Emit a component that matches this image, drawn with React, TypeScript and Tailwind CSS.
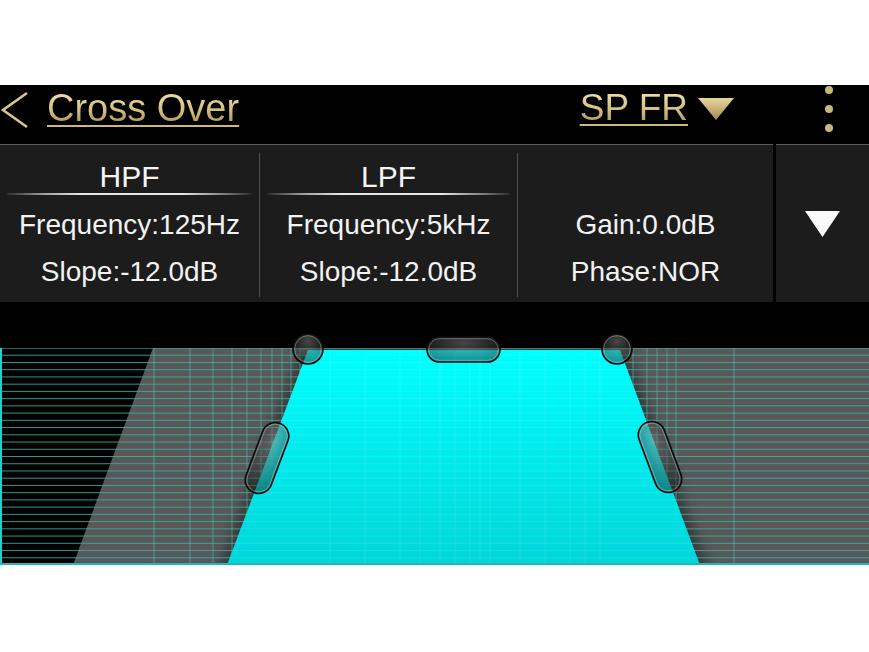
const GOLD_TEXT =
  "bg-gradient-to-b from-[#f3e9bd] via-[#d8c482] to-[#9e8647] bg-clip-text text-transparent underline decoration-[#cdb877] decoration-2 underline-offset-[4px]";

const H_LINES = Array.from({ length: 29 }, (_, i) => 46 + ((i + 1) * 217) / 30);
const V_LINES = [154, 190, 213, 232, 247, 261, 272, 282, 291, 300, 633, 647, 657, 667, 676, 734];
const CYAN_V = [330, 365, 400, 420, 440, 455, 470, 480, 490, 520, 545, 570, 585, 600];

function Header() {
  return (
    <div className="h-[59px] bg-black flex items-start">
      <svg width="32" height="50" viewBox="0 0 32 50" className="shrink-0">
        <polyline points="27,8 3,25 27,42" fill="none" stroke="#d8c68c" strokeWidth="2.6" />
      </svg>
      <span className={`ml-[15px] mt-[1px] text-[38px] leading-[44px] ${GOLD_TEXT}`}>Cross Over</span>
      <div className="flex-1" />
      <span className={`mt-[1px] text-[37px] leading-[44px] ${GOLD_TEXT}`}>SP FR</span>
      <svg width="36" height="22" viewBox="0 0 36 22" className="ml-[10px] mt-[13px] shrink-0">
        <defs>
          <linearGradient id="tri" x1="0" y1="0" x2="0" y2="1">
            <stop offset="0" stopColor="#e6d79f" />
            <stop offset="1" stopColor="#a38c4e" />
          </linearGradient>
        </defs>
        <polygon points="0,0 36,0 18,22" fill="url(#tri)" />
      </svg>
      <svg width="10" height="50" viewBox="0 0 10 50" className="ml-[90px] mr-[35px] shrink-0">
        <circle cx="5" cy="5" r="4" fill="#c9b67a" />
        <circle cx="5" cy="24" r="4" fill="#c9b67a" />
        <circle cx="5" cy="43" r="4" fill="#c9b67a" />
      </svg>
    </div>
  );
}

function Row({ children }: { children: React.ReactNode }) {
  return <div className="h-[32px] leading-[32px] text-[28px] text-[#f2f2f2] whitespace-nowrap">{children}</div>;
}

function FilterCol({ title, freq, slope, width }: { title: string; freq: string; slope: string; width: string }) {
  return (
    <div className={`${width} flex flex-col items-center pt-[16px]`}>
      <div className="h-[32px] leading-[32px] text-[30px] text-[#f4f4f4]">{title}</div>
      <div className="h-[2px] self-stretch mx-[7px] bg-[linear-gradient(90deg,#2a2a2a_0%,#9a9a9a_14%,#e6e6e6_30%,#e6e6e6_72%,#777_90%,#2a2a2a_100%)]" />
      <div className="mt-[14px]">
        <Row>{freq}</Row>
      </div>
      <div className="mt-[15px]">
        <Row>{slope}</Row>
      </div>
    </div>
  );
}

function Divider() {
  return <div className="w-px mt-[8px] mb-[5px] bg-[#505050]" />;
}

function Panel() {
  return (
    <div className="flex h-[158px] bg-black">
      <div className="w-[773px] flex bg-[#1c1c1c] border-t border-[#5c5c5c]">
        <FilterCol title="HPF" freq="Frequency:125Hz" slope="Slope:-12.0dB" width="w-[259px]" />
        <Divider />
        <FilterCol title="LPF" freq="Frequency:5kHz" slope="Slope:-12.0dB" width="w-[257px]" />
        <Divider />
        <div className="flex-1 flex flex-col items-center pt-[64px]">
          <Row>Gain:0.0dB</Row>
          <div className="mt-[15px]">
            <Row>Phase:NOR</Row>
          </div>
        </div>
      </div>
      <div className="ml-[3px] flex-1 bg-[#1c1c1c] border-t border-[#5c5c5c] flex items-center justify-center">
        <svg width="35" height="26" viewBox="0 0 35 26">
          <polygon points="0,0 35,0 17.5,26" fill="#fafafa" />
        </svg>
      </div>
    </div>
  );
}

function Knob({ cx, cy }: { cx: number; cy: number }) {
  return (
    <g>
      <circle cx={cx} cy={cy} r="15" fill="url(#knob)" stroke="#0c0c0c" strokeWidth="1.6" />
      <circle cx={cx} cy={cy} r="13.3" fill="none" stroke="rgba(255,255,255,0.3)" strokeWidth="1" />
    </g>
  );
}

function Pill({ cx, cy, w, h, angle }: { cx: number; cy: number; w: number; h: number; angle: number }) {
  const r = Math.min(w, h) / 2;
  return (
    <g transform={`rotate(${angle} ${cx} ${cy})`}>
      <rect x={cx - w / 2} y={cy - h / 2} width={w} height={h} rx={r} fill="url(#knob)" stroke="#0c0c0c" strokeWidth="1.6" />
      <rect
        x={cx - w / 2 + 1.7}
        y={cy - h / 2 + 1.7}
        width={w - 3.4}
        height={h - 3.4}
        rx={r - 1.7}
        fill="none"
        stroke="rgba(255,255,255,0.3)"
        strokeWidth="1"
      />
    </g>
  );
}

function Graph() {
  const cyanPts = "308,48 620,48 700,263 227,263";
  return (
    <svg width="869" height="263" viewBox="0 0 869 263" className="block">
      <defs>
        <linearGradient id="cy" x1="0" y1="0" x2="0" y2="1">
          <stop offset="0" stopColor="#00ffff" />
          <stop offset="1" stopColor="#00d6da" />
        </linearGradient>
        <radialGradient id="knob" cx="0.5" cy="0.25" r="0.75">
          <stop offset="0" stopColor="rgba(140,140,140,0.5)" />
          <stop offset="1" stopColor="rgba(20,20,20,0.45)" />
        </radialGradient>
        <filter id="blur" x="-20%" y="-20%" width="140%" height="140%">
          <feGaussianBlur stdDeviation="6" />
        </filter>
        <clipPath id="gclip">
          <rect x="0" y="46" width="869" height="217" />
        </clipPath>
        <clipPath id="cclip">
          <polygon points={cyanPts} />
        </clipPath>
      </defs>
      <rect x="0" y="0" width="869" height="263" fill="#000" />
      <polygon points="153,46 869,46 869,263 73,263" fill="#595757" />
      <g clipPath="url(#gclip)">
        <polygon points={cyanPts} fill="#000" opacity="0.35" stroke="#000" strokeWidth="14" filter="url(#blur)" />
      </g>
      {H_LINES.map((y) => (
        <line key={y} x1="0" x2="869" y1={y} y2={y} stroke="#36b2a7" strokeOpacity="0.85" strokeWidth="1" />
      ))}
      <line x1="0" x2="869" y1="46.5" y2="46.5" stroke="#33ada3" strokeOpacity="0.6" />
      {V_LINES.map((x) => (
        <line key={x} x1={x} x2={x} y1="46" y2="263" stroke="#4cc0b6" strokeOpacity="0.6" strokeWidth="1" />
      ))}
      <polygon points={cyanPts} fill="url(#cy)" />
      <g clipPath="url(#cclip)" opacity="0.1">
        {H_LINES.map((y) => (
          <line key={y} x1="0" x2="869" y1={y} y2={y} stroke="#fff" />
        ))}
        {CYAN_V.map((x) => (
          <line key={x} x1={x} x2={x} y1="46" y2="263" stroke="#fff" />
        ))}
      </g>
      <rect x="0" y="46" width="2" height="217" fill="#1ecfd0" />
      <rect x="0" y="261" width="869" height="2" fill="#1fb8bb" />
      <Knob cx={308} cy={47} />
      <Knob cx={617} cy={47} />
      <Pill cx={463.5} cy={47.5} w={73} h={25} angle={0} />
      <Pill cx={267} cy={156} w={27} h={74} angle={20.7} />
      <Pill cx={660} cy={155} w={27} h={74} angle={-20.5} />
    </svg>
  );
}

export default function App() {
  return (
    <div className="w-[869px] bg-white font-['Liberation_Sans',Arial,sans-serif]">
      <div className="h-[85px] bg-white" />
      <Header />
      <Panel />
      <Graph />
    </div>
  );
}
